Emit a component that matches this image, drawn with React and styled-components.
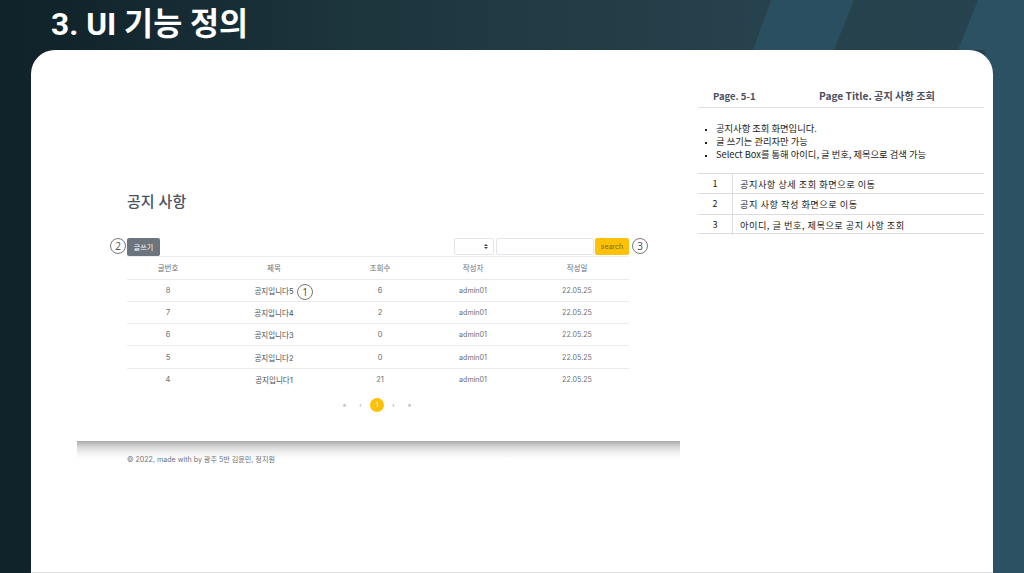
import React from 'react';
import styled, { createGlobalStyle } from 'styled-components';

const GlobalStyle = createGlobalStyle`
  html, body {
    margin: 0;
    padding: 0;
    height: 100%;
    overflow: hidden;
  }
  body {
    font-family: "Noto Sans CJK KR", "Noto Sans", sans-serif;
  }
`;

const Slide = styled.div`
  width: 1024px;
  height: 573px;
  display: flex;
  flex-direction: column;
  overflow: hidden;
  background: linear-gradient(90deg, #10222a 0, #12252d 80px, #1c343c 340px, #27424d 750px, #26434f 985px, #2c5162 985px);
`;

const Header = styled.header`
  position: relative;
  flex: 0 0 50px;
  display: flex;
  align-items: center;
  padding-left: 51px;
`;

const Stripes = styled.svg`
  position: absolute;
  left: 0;
  top: 0;
`;

const SlideTitle = styled.h1`
  position: relative;
  margin: 0;
  font-family: Roboto, "Noto Sans CJK KR", sans-serif;
  font-size: 31.6px;
  line-height: 40px;
  font-weight: 700;
  color: #fff;
`;

const Panel = styled.main`
  flex: 1;
  margin: 0 31px;
  background: #fff;
  border-radius: 24px 24px 0 0;
  border-bottom: 1px solid #e2e2e2;
  display: flex;
`;

const Capture = styled.section`
  width: 603px;
  margin-left: 46px;
  padding-top: 142px;
  font-family: Inter, "Noto Sans CJK KR", sans-serif;
`;

const Board = styled.div`
  padding: 0 51px 0 50px;
  height: 249px;
`;

const BoardTitle = styled.h2`
  margin: 0 0 26px;
  font-size: 15px;
  line-height: 20px;
  font-weight: 500;
  color: #4a5160;
`;

const Toolbar = styled.div`
  position: relative;
  display: flex;
  align-items: center;
  gap: 2px;
  height: 17px;
`;

const WriteButton = styled.button`
  margin-right: auto;
  width: 33px;
  height: 18px;
  padding: 0;
  border: 0;
  border-radius: 2px;
  background: #6c757d;
  color: #fff;
  font: inherit;
  font-size: 7px;
`;

const SelectBox = styled.div`
  width: 40px;
  height: 17px;
  box-sizing: border-box;
  padding-right: 5px;
  border: 1px solid #e3e6ea;
  border-radius: 2px;
  background: #fff;
  display: flex;
  flex-direction: column;
  align-items: flex-end;
  justify-content: center;
  gap: 1px;
`;

const Caret = styled.span`
  width: 0;
  height: 0;
  border-left: 2px solid transparent;
  border-right: 2px solid transparent;
  border-${p => (p.$up ? 'bottom' : 'top')}: 2px solid #444;
`;

const SearchInput = styled.div`
  width: 98px;
  height: 17px;
  box-sizing: border-box;
  border: 1px solid #e3e6ea;
  border-radius: 2px;
`;

const SearchButton = styled.button`
  width: 34px;
  height: 17px;
  margin-left: -1px;
  padding: 0;
  border: 0;
  border-radius: 2px;
  background: #ffc107;
  color: #7a6a2a;
  font: inherit;
  font-size: 7px;
`;

const Marker = styled.span`
  position: absolute;
  left: ${p => p.$left};
  right: ${p => p.$right};
  top: ${p => p.$top};
  width: 16px;
  height: 16px;
  box-sizing: border-box;
  border: 1px solid #777;
  border-radius: 50%;
  background: #fff;
  display: flex;
  align-items: center;
  justify-content: center;
  font-family: "Noto Sans", sans-serif;
  font-size: 10px;
  line-height: 1;
  color: #555;
`;

const Rows = styled.div`
  margin-top: 1px;
  border-top: 1px solid #eceef0;
`;

const Row = styled.div`
  display: grid;
  grid-template-columns: 82px 130px 82px 104px 104px;
  align-items: center;
  height: ${p => (p.$head ? '21.5px' : '21.3px')};
  border-bottom: ${p => (p.$last ? '0' : '1px solid #e9ecef')};
  font-size: 7.5px;
  color: ${p => (p.$head ? '#676d75' : '#6a6e74')};
  text-align: center;
`;

const RowTitle = styled.span`
  position: relative;
  color: #4c4f55;
`;

const LatinCell = styled.span`
  font-size: 7.1px;
`;

const Pagination = styled.nav`
  margin-top: 8px;
  display: flex;
  justify-content: center;
  align-items: center;
  gap: 3px;
  padding-right: 2px;
`;

const PageArrow = styled.span`
  width: 13px;
  text-align: center;
  font-size: 6px;
  line-height: 14px;
  color: #8d9399;
`;

const PageNumber = styled.span`
  width: 14px;
  height: 14px;
  border-radius: 50%;
  background: #ffc107;
  color: #fff;
  font-size: 6.5px;
  line-height: 14px;
  text-align: center;
`;

const Footer = styled.footer`
  height: 32px;
  padding: 13px 0 0 50px;
  box-sizing: border-box;
  background: linear-gradient(180deg, #a9a9a9 0, #d8d8d8 6px, #f1f1f1 12px, #fff 18px);
  font-size: 7.1px;
  line-height: 12px;
  color: #6a7078;
`;

const Spec = styled.aside`
  width: 286px;
  margin-left: 18px;
  padding-top: 37px;
  font-family: "Noto Sans CJK KR", "Noto Sans", sans-serif;
`;

const SpecHead = styled.div`
  height: 21px;
  box-sizing: border-box;
  padding: 0 0 3px 15px;
  display: flex;
  align-items: center;
  border-bottom: 1px solid #e2e2e2;
  font-size: 9.5px;
  font-weight: 700;
  color: #4b4f60;
`;

const SpecPage = styled.span`
  width: 106px;
`;

const SpecTitle = styled.span`
  font-size: 10.2px;
`;

const Notes = styled.ul`
  margin: 14px 0 12px;
  padding: 0 0 0 18px;
  height: 39px;
  list-style-type: square;
  font-size: 9.3px;
  line-height: 13px;
  color: #222;
`;

const Note = styled.li`
  white-space: nowrap;
  &::marker {
    font-size: 6px;
  }
`;

const SpecRow = styled.div`
  display: grid;
  grid-template-columns: 35px 1fr;
  height: 20.3px;
  box-sizing: border-box;
  border-top: 1px solid #dcdcdc;
  border-bottom: ${p => (p.$last ? '1px solid #dcdcdc' : '0')};
  font-size: 9.2px;
  line-height: 20px;
  color: #222;
`;

const SpecNo = styled.span`
  text-align: center;
  font-size: 9px;
  border-right: 1px solid #dcdcdc;
`;

const SpecText = styled.span`
  padding-left: 7px;
  letter-spacing: 0.5px;
`;

const posts = [
  { no: 8, title: '공지입니다5', views: 6 },
  { no: 7, title: '공지입니다4', views: 2 },
  { no: 6, title: '공지입니다3', views: 0 },
  { no: 5, title: '공지입니다2', views: 0 },
  { no: 4, title: '공지입니다1', views: 21 },
];

const notes = [
  '공지사항 조회 화면입니다.',
  '글 쓰기는 관리자만 가능',
  'Select Box를 통해 아이디, 글 번호, 제목으로 검색 가능',
];

const specs = [
  '공지사항 상세 조회 화면으로 이동',
  '공지 사항 작성 화면으로 이동',
  '아이디, 글 번호, 제목으로 공지 사항 조회',
];

export default function App() {
  return (
    <Slide>
      <GlobalStyle />
      <Header>
        <Stripes width="1024" height="50" viewBox="0 0 1024 50">
          <polygon points="771,0 854,0 834,50 753,50" fill="#2a4f60" />
          <polygon points="978,0 1024,0 1024,50 958,50" fill="#2c5162" />
        </Stripes>
        <SlideTitle>3. UI 기능 정의</SlideTitle>
      </Header>
      <Panel>
        <Capture>
          <Board>
            <BoardTitle>공지 사항</BoardTitle>
            <Toolbar>
              <Marker $left="-17px" $top="0">2</Marker>
              <WriteButton>글쓰기</WriteButton>
              <SelectBox>
                <Caret $up />
                <Caret />
              </SelectBox>
              <SearchInput />
              <SearchButton>search</SearchButton>
              <Marker $right="-19px" $top="0">3</Marker>
            </Toolbar>
            <Rows>
              <Row $head>
                <span>글번호</span>
                <span>제목</span>
                <span>조회수</span>
                <span>작성자</span>
                <span>작성일</span>
              </Row>
              {posts.map((post, i) => (
                <Row key={post.no} $last={i === posts.length - 1}>
                  <span>{post.no}</span>
                  <RowTitle>
                    {post.title}
                    {i === 0 && <Marker $left="88px" $top="-1px">1</Marker>}
                  </RowTitle>
                  <span>{post.views}</span>
                  <LatinCell>admin01</LatinCell>
                  <LatinCell>22.05.25</LatinCell>
                </Row>
              ))}
            </Rows>
            <Pagination>
              <PageArrow>«</PageArrow>
              <PageArrow>‹</PageArrow>
              <PageNumber>1</PageNumber>
              <PageArrow>›</PageArrow>
              <PageArrow>»</PageArrow>
            </Pagination>
          </Board>
          <Footer>© 2022, made with by 광주 5반 김윤민, 정지원</Footer>
        </Capture>
        <Spec>
          <SpecHead>
            <SpecPage>Page. 5-1</SpecPage>
            <SpecTitle>Page Title. 공지 사항 조회</SpecTitle>
          </SpecHead>
          <Notes>
            {notes.map(note => (
              <Note key={note}>{note}</Note>
            ))}
          </Notes>
          {specs.map((text, i) => (
            <SpecRow key={text} $last={i === specs.length - 1}>
              <SpecNo>{i + 1}</SpecNo>
              <SpecText>{text}</SpecText>
            </SpecRow>
          ))}
        </Spec>
      </Panel>
    </Slide>
  );
}
